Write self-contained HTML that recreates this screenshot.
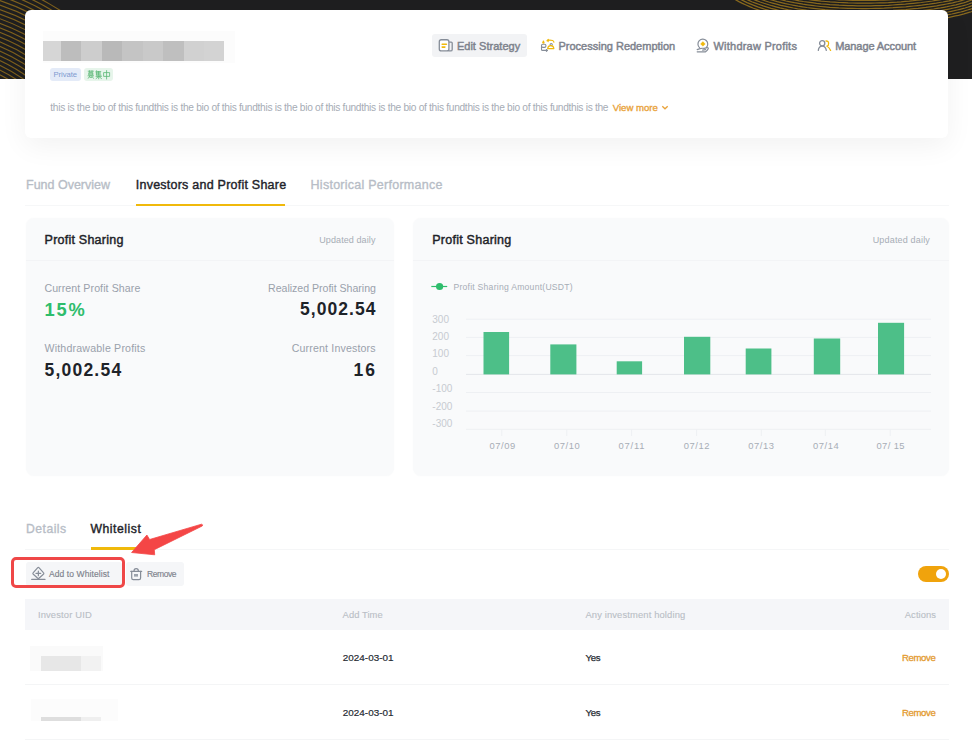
<!DOCTYPE html>
<html><head><meta charset="utf-8">
<style>
html,body{margin:0;padding:0;}
body{width:972px;height:749px;position:relative;overflow:hidden;background:#ffffff;font-family:"Liberation Sans",sans-serif;}
.a{position:absolute;}
.t{position:absolute;white-space:nowrap;}
</style></head><body>
<!-- top dark band -->
<div class="a" style="left:0;top:0;width:972px;height:79px;background:#1f1f20;"></div>
<svg class="a" style="left:0;top:0" width="972" height="79" viewBox="0 0 972 79">
  <g fill="none" stroke="#7f611d" stroke-width="1.15">
    <path d="M-1 -17.8 A235.5 235.5 0 0 1 132.8 85 M-1 -13.3 A231.2 231.2 0 0 1 127.8 85 M-1 -8.8 A226.9 226.9 0 0 1 122.7 85 M-1 -4.3 A222.6 222.6 0 0 1 117.5 85 M-1 0.2 A218.3 218.3 0 0 1 112.3 85 M-1 4.8 A214.0 214.0 0 0 1 107.1 85 M-1 9.3 A209.7 209.7 0 0 1 101.8 85 M-1 13.8 A205.4 205.4 0 0 1 96.5 85 M-1 18.4 A201.1 201.1 0 0 1 91.1 85 M-1 23.0 A196.8 196.8 0 0 1 85.6 85 M-1 27.5 A192.5 192.5 0 0 1 80.1 85 M-1 32.1 A188.2 188.2 0 0 1 74.4 85 M-1 36.7 A183.9 183.9 0 0 1 68.7 85 M-1 41.4 A179.6 179.6 0 0 1 62.9 85 M-1 46.0 A175.3 175.3 0 0 1 56.9 85 M-1 50.7 A171.0 171.0 0 0 1 50.8 85 M-1 55.4 A166.7 166.7 0 0 1 44.5 85 M-1 60.1 A162.4 162.4 0 0 1 38.0 85 M-1 64.8 A158.1 158.1 0 0 1 31.3 85 M-1 69.6 A153.8 153.8 0 0 1 24.3 85 M-1 74.4 A149.5 149.5 0 0 1 17.0 85 M-1 79.2 A145.2 145.2 0 0 1 9.2 85 M-1 84.0 A140.9 140.9 0 0 1 0.7 85"/>
    <path d="M729.1 -4.2 L732.3 -2.2 L735.5 -0.3 L738.9 1.6 L742.4 3.4 L746.0 5.0 L749.7 6.6 L753.5 8.2 L757.4 9.6 L761.4 11.0 L765.5 12.3 L769.6 13.5 L773.8 14.7 L778.1 15.7 L782.5 16.8 L786.9 17.7 L791.3 18.6 L795.9 19.4 L800.4 20.2 L805.0 20.9 L809.6 21.5 L814.3 22.1 L819.0 22.6 L823.7 23.0 L828.4 23.4 L833.2 23.8 L837.9 24.1 L842.7 24.3 L847.4 24.5 L852.2 24.6 L856.9 24.7 L861.7 24.8 L866.4 24.8 L871.0 24.7 L875.7 24.6 L880.3 24.5 L884.9 24.3 L889.4 24.1 L893.9 23.9 L898.4 23.6 L902.7 23.3 L907.1 22.9 L911.3 22.6 L915.5 22.1 L919.6 21.7 L923.6 21.2 L927.6 20.7 L931.4 20.2 L935.2 19.7 L938.8 19.1 L942.4 18.5 L945.8 17.9 L949.2 17.3 L952.4 16.6 L955.5 15.9 L958.5 15.3 L961.3 14.6 L964.0 13.9 L966.6 13.1 L969.0 12.4 L971.3 11.7 L973.4 10.9 L975.3 10.2 L977.1 9.4 L978.7 8.7 L980.2 7.9 L981.5 7.1 L982.6 6.4 L983.5 5.6 M733.7 -4.5 L736.9 -2.6 L740.2 -0.8 L743.6 0.9 L747.1 2.6 L750.8 4.1 L754.5 5.6 L758.4 7.1 L762.3 8.4 L766.3 9.7 L770.4 10.9 L774.5 12.1 L778.8 13.1 L783.1 14.1 L787.4 15.1 L791.8 15.9 L796.3 16.7 L800.8 17.5 L805.4 18.2 L810.0 18.8 L814.6 19.4 L819.3 19.9 L824.0 20.3 L828.7 20.7 L833.4 21.1 L838.1 21.4 L842.8 21.6 L847.5 21.8 L852.3 21.9 L857.0 22.0 L861.7 22.1 L866.4 22.1 L871.0 22.0 L875.6 21.9 L880.2 21.8 L884.8 21.6 L889.3 21.4 L893.8 21.2 L898.2 20.9 L902.5 20.6 L906.8 20.3 L911.1 19.9 L915.2 19.5 L919.3 19.0 L923.3 18.6 L927.2 18.1 L931.0 17.5 L934.8 17.0 L938.4 16.4 L941.9 15.8 L945.3 15.2 L948.7 14.6 L951.8 14.0 L954.9 13.3 L957.8 12.6 L960.6 12.0 L963.3 11.3 L965.8 10.5 L968.2 9.8 L970.4 9.1 L972.4 8.4 L974.3 7.7 L976.0 7.0 L977.5 6.2 L978.9 5.5 L980.0 4.9 L980.9 4.2 L981.7 3.5 M738.2 -5.0 L741.4 -3.2 L744.8 -1.5 L748.3 0.1 L751.8 1.7 L755.5 3.1 L759.3 4.5 L763.1 5.9 L767.1 7.1 L771.1 8.3 L775.2 9.4 L779.4 10.5 L783.7 11.5 L788.0 12.4 L792.3 13.3 L796.8 14.1 L801.3 14.8 L805.8 15.5 L810.3 16.1 L814.9 16.7 L819.5 17.2 L824.2 17.6 L828.9 18.0 L833.5 18.4 L838.2 18.7 L842.9 18.9 L847.6 19.1 L852.3 19.2 L857.0 19.3 L861.7 19.4 L866.3 19.4 L871.0 19.3 L875.6 19.2 L880.1 19.1 L884.7 18.9 L889.2 18.7 L893.6 18.5 L898.0 18.2 L902.3 17.9 L906.6 17.6 L910.8 17.2 L914.9 16.8 L919.0 16.3 L923.0 15.9 L926.9 15.4 L930.7 14.9 L934.4 14.3 L938.0 13.8 L941.5 13.2 L944.9 12.6 L948.1 12.0 L951.3 11.3 L954.3 10.7 L957.2 10.0 L960.0 9.3 L962.6 8.6 L965.1 8.0 L967.4 7.3 L969.5 6.6 L971.5 5.9 L973.3 5.2 L974.9 4.5 L976.3 3.8 L977.5 3.2 L978.5 2.6 L979.3 2.1 L980.0 1.5 M742.7 -5.6 L746.0 -3.9 L749.4 -2.4 L752.9 -0.8 L756.5 0.6 L760.2 2.0 L764.0 3.3 L767.9 4.5 L771.8 5.7 L775.9 6.8 L780.0 7.9 L784.2 8.9 L788.5 9.8 L792.8 10.6 L797.2 11.4 L801.7 12.2 L806.2 12.8 L810.7 13.5 L815.2 14.0 L819.8 14.5 L824.4 15.0 L829.1 15.3 L833.7 15.7 L838.4 16.0 L843.1 16.2 L847.7 16.4 L852.4 16.5 L857.1 16.6 L861.7 16.7 L866.3 16.7 L870.9 16.6 L875.5 16.5 L880.1 16.4 L884.6 16.2 L889.0 16.0 L893.4 15.8 L897.8 15.5 L902.1 15.2 L906.4 14.9 L910.5 14.5 L914.7 14.1 L918.7 13.7 L922.6 13.2 L926.5 12.7 L930.3 12.2 L934.0 11.7 L937.5 11.1 L941.0 10.5 L944.4 9.9 L947.6 9.3 L950.7 8.7 L953.7 8.0 L956.6 7.4 L959.3 6.7 L961.9 6.0 L964.3 5.4 L966.6 4.7 L968.7 4.0 L970.6 3.3 L972.3 2.7 L973.8 2.0 L975.1 1.4 L976.2 0.8 L977.1 0.3 L977.6 -0.1 L978.2 -0.6 M750.5 -4.8 L753.9 -3.3 L757.4 -1.9 L761.1 -0.6 L764.8 0.7 L768.7 2.0 L772.6 3.1 L776.6 4.2 L780.7 5.3 L784.8 6.2 L789.1 7.1 L793.4 8.0 L797.7 8.8 L802.1 9.5 L806.5 10.2 L811.0 10.8 L815.5 11.3 L820.1 11.8 L824.7 12.3 L829.3 12.7 L833.9 13.0 L838.5 13.3 L843.2 13.5 L847.8 13.7 L852.5 13.8 L857.1 13.9 L861.7 14.0 L866.3 14.0 L870.9 13.9 L875.4 13.8 L880.0 13.7 L884.4 13.5 L888.9 13.3 L893.3 13.1 L897.6 12.8 L901.9 12.5 L906.1 12.2 L910.3 11.8 L914.4 11.4 L918.4 11.0 L922.3 10.5 L926.2 10.0 L929.9 9.5 L933.6 9.0 L937.1 8.4 L940.6 7.9 L943.9 7.3 L947.1 6.7 L950.2 6.0 L953.1 5.4 L956.0 4.8 L958.6 4.1 L961.2 3.4 L963.5 2.8 L965.8 2.1 L967.8 1.4 L969.6 0.8 L971.3 0.2 L972.7 -0.5 L973.9 -1.0 L974.9 -1.5 L975.6 -1.9 L976.0 -2.2 L976.5 -2.7 M754.9 -5.8 L758.4 -4.4 L762.0 -3.1 L765.7 -1.8 L769.5 -0.6 L773.3 0.5 L777.3 1.6 L781.3 2.6 L785.4 3.6 L789.6 4.5 L793.9 5.3 L798.2 6.1 L802.5 6.8 L806.9 7.5 L811.4 8.1 L815.9 8.6 L820.4 9.1 L824.9 9.6 L829.5 10.0 L834.1 10.3 L838.7 10.6 L843.3 10.8 L847.9 11.0 L852.5 11.1 L857.1 11.2 L861.7 11.3 L866.3 11.3 L870.9 11.2 L875.4 11.1 L879.9 11.0 L884.3 10.8 L888.8 10.6 L893.1 10.4 L897.4 10.1 L901.7 9.8 L905.9 9.5 L910.0 9.1 L914.1 8.7 L918.1 8.3 L922.0 7.8 L925.8 7.4 L929.5 6.8 L933.2 6.3 L936.7 5.8 L940.1 5.2 L943.4 4.6 L946.6 4.0 L949.6 3.4 L952.6 2.8 L955.3 2.1 L958.0 1.5 L960.5 0.8 L962.8 0.2 L964.9 -0.5 L966.9 -1.1 L968.7 -1.7 L970.3 -2.3 L971.6 -2.9 L972.7 -3.4 L973.6 -3.9 L974.1 -4.2 L974.4 -4.4 L974.8 -4.7 M762.9 -5.6 L766.5 -4.4 L770.3 -3.2 L774.1 -2.1 L778.0 -1.0 L782.0 0.0 L786.0 1.0 L790.2 1.8 L794.4 2.7 L798.6 3.4 L802.9 4.2 L807.3 4.8 L811.7 5.4 L816.2 6.0 L820.7 6.5 L825.2 6.9 L829.7 7.3 L834.3 7.6 L838.8 7.9 L843.4 8.1 L848.0 8.3 L852.6 8.4 L857.2 8.5 L861.7 8.6 L866.3 8.6 L870.8 8.5 L875.3 8.4 L879.8 8.3 L884.2 8.2 L888.6 7.9 L893.0 7.7 L897.3 7.4 L901.5 7.1 L905.7 6.8 L909.8 6.4 L913.8 6.0 L917.8 5.6 L921.7 5.2 L925.5 4.7 L929.2 4.2 L932.8 3.6 L936.3 3.1 L939.6 2.5 L942.9 2.0 L946.1 1.4 L949.1 0.8 L952.0 0.1 L954.7 -0.5 L957.3 -1.1 L959.8 -1.8 L962.0 -2.4 L964.1 -3.0 L966.1 -3.7 L967.8 -4.3 L969.3 -4.9 L970.5 -5.4 L971.5 -5.9 M771.0 -5.8 L774.8 -4.7 L778.7 -3.6 L782.6 -2.6 L786.6 -1.7 L790.7 -0.8 L794.9 0.0 L799.1 0.8 L803.4 1.5 L807.7 2.1 L812.1 2.7 L816.5 3.3 L820.9 3.8 L825.4 4.2 L829.9 4.6 L834.5 4.9 L839.0 5.2 L843.5 5.4 L848.1 5.6 L852.7 5.7 L857.2 5.8 L861.8 5.9 L866.3 5.9 L870.8 5.8 L875.3 5.7 L879.7 5.6 L884.1 5.5 L888.5 5.3 L892.8 5.0 L897.1 4.7 L901.3 4.4 L905.4 4.1 L909.5 3.7 L913.5 3.3 L917.5 2.9 L921.3 2.5 L925.1 2.0 L928.8 1.5 L932.4 1.0 L935.8 0.4 L939.2 -0.1 L942.4 -0.7 L945.5 -1.3 L948.5 -1.9 L951.4 -2.5 L954.1 -3.1 L956.7 -3.8 L959.1 -4.4 L961.3 -5.0 L963.3 -5.6 M783.2 -5.2 L787.2 -4.3 L791.2 -3.4 L795.4 -2.6 L799.5 -1.9 L803.8 -1.2 L808.1 -0.5 L812.4 0.1 L816.8 0.6 L821.2 1.1 L825.7 1.5 L830.1 1.9 L834.6 2.2 L839.1 2.5 L843.7 2.7 L848.2 2.9 L852.7 3.0 L857.3 3.1 L861.8 3.2 L866.3 3.2 L870.7 3.1 L875.2 3.0 L879.6 2.9 L884.0 2.8 L888.4 2.6 L892.6 2.3 L896.9 2.1 L901.1 1.8 L905.2 1.4 L909.3 1.1 L913.3 0.7 L917.2 0.2 L921.0 -0.2 L924.8 -0.7 L928.4 -1.2 L932.0 -1.7 L935.4 -2.2 L938.7 -2.8 L941.9 -3.4 L945.0 -3.9 L948.0 -4.5 L950.8 -5.1 L953.5 -5.8 M795.9 -5.3 L800.0 -4.5 L804.2 -3.8 L808.5 -3.2 L812.8 -2.6 L817.1 -2.1 L821.5 -1.6 L825.9 -1.2 L830.3 -0.8 L834.8 -0.5 L839.3 -0.2 L843.8 0.0 L848.3 0.2 L852.8 0.3 L857.3 0.4 L861.8 0.5 L866.3 0.5 L870.7 0.4 L875.1 0.3 L879.5 0.2 L883.9 0.1 L888.2 -0.1 L892.5 -0.4 L896.7 -0.6 L900.9 -0.9 L905.0 -1.3 L909.0 -1.6 L913.0 -2.0 L916.9 -2.4 L920.7 -2.9 L924.4 -3.4 L928.0 -3.8 L931.5 -4.4 L935.0 -4.9 L938.3 -5.4 M808.8 -5.9 L813.1 -5.3 L817.4 -4.8 L821.8 -4.3 L826.1 -3.9 L830.6 -3.5 L835.0 -3.2 L839.4 -2.9 L843.9 -2.7 L848.4 -2.5 L852.9 -2.4 L857.3 -2.3 L861.8 -2.2 L866.2 -2.2 L870.7 -2.3 L875.1 -2.4 L879.4 -2.5 L883.8 -2.6 L888.1 -2.8 L892.3 -3.1 L896.5 -3.3 L900.7 -3.6 L904.8 -4.0 L908.8 -4.3 L912.7 -4.7 L916.6 -5.1 L920.4 -5.6 M835.2 -5.9 L839.6 -5.6 L844.0 -5.4 L848.5 -5.2 L852.9 -5.1 L857.4 -5.0 L861.8 -4.9 L866.2 -4.9 L870.6 -5.0 L875.0 -5.1 L879.4 -5.2 L883.7 -5.3 L887.9 -5.5 L892.2 -5.8" stroke-width="1.2" stroke="#8a6a1e"/>
  </g>
</svg>
<!-- header card -->
<div class="a" style="left:25.2px;top:9.5px;width:923.3px;height:128.5px;background:#fff;border-radius:6px;box-shadow:0 8px 28px rgba(0,0,0,0.055);"></div>
<!-- blurred name -->
<div class="a" style="left:43px;top:31px;width:192px;height:31.5px;background:#fcfcfc;"></div>
<div class="a" style="left:43px;top:40.8px;height:20.2px;display:flex;filter:blur(0.4px);">
  <div style="width:18px;background:#d6d6d6"></div><div style="width:20px;background:#bdbdbd"></div><div style="width:21px;background:#cdcdcd"></div><div style="width:20px;background:#b9b9b9"></div><div style="width:21px;background:#c4c4c4"></div><div style="width:20px;background:#c9c9c9"></div><div style="width:21px;background:#bfbfbf"></div><div style="width:20px;background:#d1d1d1"></div><div style="width:20px;background:#d3d3d3"></div>
</div>
<!-- tags -->
<div class="a" style="left:50px;top:67.8px;width:30.5px;height:13.7px;background:#e4ebf8;border-radius:3px;"></div>
<div class="a" style="left:84px;top:67.8px;width:29px;height:13.7px;background:#e7f5eb;border-radius:3px;"></div>
<svg class="a" style="left:87px;top:70px" width="24" height="10" viewBox="0 0 24 10">
  <g fill="none" stroke="#5ab775" stroke-width="0.8">
    <!-- 募 -->
    <path d="M0.8 1.2H6.8M2.6 0.3V2.2M5 0.3V2.2M1.8 2.6H5.8V5H1.8ZM1.8 3.8H5.8M0.6 5.8H7M3 5.8L1 8.6M4.6 5.8L6.6 8.6M2.6 7.4H5"/>
    <!-- 集 -->
    <path d="M9.6 0.4L8.8 2.2M9.4 1.6V5.4M9.4 1.6H14.2M9.4 2.8H13.8M9.4 4H13.8M9.4 5.2H14.4M11.6 1V5.2M8.6 6.4H14.8M11.7 5.6V9.2M11.4 6.6L8.8 8.8M12 6.6L14.8 8.8"/>
    <!-- 中 -->
    <path d="M16.6 2.6H22.6V6.4H16.6ZM19.6 0.2V9.4"/>
  </g>
</svg>
<!-- edit strategy bg -->
<div class="a" style="left:431.8px;top:33.9px;width:95px;height:23.1px;background:#f2f3f5;border-radius:3px;"></div>
<!-- icons header -->
<svg class="a" style="left:436px;top:37px" width="18" height="16" viewBox="0 0 18 16">
  <g fill="none" stroke="#868d98" stroke-width="1.3">
    <rect x="3.3" y="2.75" width="9.6" height="11.2" rx="2" fill="#fff"/>
    <path d="M12.9 5.1H15.2Q16.2 5.1 16.2 6.1V12.4Q16.2 13.95 14.6 13.95H12.4"/>
  </g>
  <g stroke="#f0b90b" stroke-width="1.6" stroke-linecap="round">
    <path d="M6.2 7.3H10.4M6.2 10.1H8.9"/>
  </g>
</svg>
<svg class="a" style="left:539px;top:37px" width="18" height="16" viewBox="0 0 18 16">
  <g fill="none" stroke="#868d98" stroke-width="1.1" stroke-linecap="round" stroke-linejoin="round">
    <rect x="2.5" y="7.2" width="4.4" height="3.2" rx="1.3"/>
    <path d="M2.5 9.6V12.4Q2.5 13.4 3.6 13.4H8.4M7.4 12.5L8.5 13.4L7.4 14.3"/>
    <circle cx="12.2" cy="7.6" r="1.1"/>
  </g>
  <g fill="none" stroke="#f0b90b" stroke-width="1.1" stroke-linecap="round" stroke-linejoin="round">
    <path d="M8 3.7Q10.6 2.6 13.6 3.6Q14.9 4.2 14.9 5.2M9.3 2.4L8 3.7L9.4 4.6"/>
    <path d="M8.6 11.6Q9 8.6 11.8 8.6Q14.6 8.6 14.9 11.6Z"/>
    <path d="M4.4 4L3.7 5.7Q4.4 6.5 5.1 5.7Z" fill="#f0b90b"/>
  </g>
</svg>
<svg class="a" style="left:695px;top:37px" width="16" height="16" viewBox="0 0 16 16">
  <g fill="none" stroke="#868d98" stroke-width="1.2" stroke-linecap="round" stroke-linejoin="round">
    <path d="M4.5 10.6A4.9 4.9 0 1 1 11.4 10.4"/>
    <path d="M2.2 12.6L5 11.6Q7 11 9.2 11.4L12.2 10.6Q13.6 10.6 13.2 11.8Q12.4 13.6 10.6 14.8H2.2"/>
    <path d="M7.6 13.2L10.6 12.6"/>
  </g>
  <path d="M7.9 4.6L10.3 6.9L7.9 9.2L5.5 6.9Z" fill="#f0b90b" stroke="#f0b90b" stroke-width="0.3" stroke-linejoin="round"/>
</svg>
<svg class="a" style="left:816px;top:37px" width="17" height="16" viewBox="0 0 17 16">
  <g fill="none" stroke-width="1.3" stroke-linecap="round">
    <circle cx="6.2" cy="6.2" r="2.6" stroke="#868d98"/>
    <path d="M2.3 13.4Q2.8 9.2 6.2 9.2Q9.6 9.2 10.3 13.4" stroke="#868d98"/>
    <path d="M10 4Q12.6 3.8 12.6 6.4Q12.6 8.6 11.2 9.2Q13.4 10.6 14.6 13.4" stroke="#f0b90b"/>
  </g>
</svg>
<!-- view more chevron -->
<svg class="a" style="left:661px;top:104px" width="8" height="7" viewBox="0 0 8 7">
  <path d="M1.3 2.2L4 4.8L6.7 2.2" fill="none" stroke="#e9a33b" stroke-width="1.3"/>
</svg>
<!-- tabs divider -->
<div class="a" style="left:25px;top:205px;width:924px;height:1px;background:#f6f7f8;"></div>
<div class="a" style="left:135.8px;top:204px;width:149.7px;height:2px;background:#f0b90b;"></div>
<!-- left card -->
<div class="a" style="left:25.5px;top:218px;width:368.5px;height:258.2px;background:#f9fafb;border-radius:8px;box-shadow:0 0 2px rgba(0,0,0,0.025);"></div>
<div class="a" style="left:25.5px;top:260px;width:368.5px;height:1px;background:#f3f4f6;"></div>
<!-- right card -->
<div class="a" style="left:413.3px;top:218px;width:535.7px;height:258.2px;background:#f9fafb;border-radius:8px;box-shadow:0 0 2px rgba(0,0,0,0.025);"></div>
<div class="a" style="left:413.3px;top:260px;width:535.7px;height:1px;background:#f3f4f6;"></div>
<!-- chart -->
<svg class="a" style="left:413px;top:270px" width="536" height="190" viewBox="413 270 536 190">
  <g stroke="#eef0f3" stroke-width="1">
    <path d="M466 319.2H931M466 337.4H931M466 355.6H931M466 392.5H931M466 411.1H931M466 429.3H931"/>
    <path d="M501.8 429.3V436M566.8 429.3V436M631.6 429.3V436M696.6 429.3V436M761.3 429.3V436M825.3 429.3V436M890.2 429.3V436"/>
  </g>
  <path d="M466 374.4H931" stroke="#e4e6ea" stroke-width="1"/>
  <g fill="#4dbf88">
    <rect x="483.5" y="332" width="25.6" height="42.4"/>
    <rect x="550.3" y="344.4" width="26.1" height="30"/>
    <rect x="616.7" y="361.3" width="25.4" height="13.1"/>
    <rect x="684" y="336.8" width="26.3" height="37.6"/>
    <rect x="745.7" y="348.5" width="25.7" height="25.9"/>
    <rect x="813.8" y="338.5" width="26.4" height="35.9"/>
    <rect x="878" y="322.8" width="26.1" height="51.6"/>
  </g>
  <path d="M431.3 286.5H447.2" stroke="#2ebd6c" stroke-width="1.2"/>
  <circle cx="439.6" cy="286.5" r="3.6" fill="#2ebd6c"/>
</svg>
<!-- sub tabs divider -->
<div class="a" style="left:25px;top:548.5px;width:924px;height:1px;background:#f5f6f7;"></div>
<div class="a" style="left:90.5px;top:547px;width:51px;height:2.5px;background:#f0b90b;"></div>
<!-- buttons -->
<div class="a" style="left:25.5px;top:561.5px;width:96px;height:24px;background:#f5f6f8;border-radius:3px;"></div>
<div class="a" style="left:125.5px;top:561.5px;width:58px;height:24px;background:#f5f6f8;border-radius:3px;"></div>
<svg class="a" style="left:29px;top:563px" width="20" height="20" viewBox="0 0 20 20">
  <g fill="none" stroke="#868d98" stroke-width="1.2" stroke-linecap="round" stroke-linejoin="round">
    <path d="M8.55 4.8Q9.35 4 10.15 4.8L14.4 9.6Q15.2 10.4 14.4 11.2L10.2 15Q9.35 15.7 8.5 15L4.3 11.2Q3.5 10.4 4.3 9.6Z"/>
    <path d="M7 10.4H11.7M9.35 8.1V12.7"/>
    <path d="M2.7 16.4H16"/>
  </g>
</svg>
<svg class="a" style="left:127px;top:563px" width="20" height="20" viewBox="0 0 20 20">
  <g fill="none" stroke="#868d98" stroke-width="1.2" stroke-linecap="round" stroke-linejoin="round">
    <path d="M3.7 8.3H14.7"/>
    <path d="M7 8.2Q7 5.6 9.2 5.6Q11.4 5.6 11.4 8.2"/>
    <path d="M4.7 8.3V15Q4.7 16.6 6.3 16.6H12Q13.6 16.6 13.6 15V8.3"/>
  </g>
  <rect x="7" y="11" width="4" height="2.6" fill="#9ca3ad"/>
</svg>
<!-- red highlight box -->
<div class="a" style="left:11.3px;top:557px;width:107.7px;height:25.3px;border:3px solid #ef4747;border-radius:5px;"></div>
<!-- arrow -->
<svg class="a" style="left:120px;top:515px" width="90" height="45" viewBox="120 515 90 45">
  <path d="M131.6 552.5L146.9 535L149.6 539.5L201.5 524.2Q203.4 524.6 202.2 526L154.3 549.7L154.7 554.8Z" fill="#f44646" stroke="#f44646" stroke-width="0.8" stroke-linejoin="round"/>
</svg>
<!-- toggle -->
<div class="a" style="left:917.7px;top:566.3px;width:31.2px;height:15.4px;background:#f0a30c;border-radius:8px;"></div>
<div class="a" style="left:935.8px;top:568.8px;width:10.5px;height:10.5px;background:#fff;border-radius:50%;"></div>
<!-- table header -->
<div class="a" style="left:25px;top:598.5px;width:924px;height:31px;background:#f5f6f9;"></div>
<div class="a" style="left:25px;top:683.5px;width:924px;height:1px;background:#f4f5f6;"></div>
<div class="a" style="left:25px;top:739px;width:924px;height:1px;background:#f4f5f6;"></div>
<!-- blurred uid rows -->
<div class="a" style="left:30px;top:646.3px;width:73px;height:24.4px;background:#fafafa;"></div>
<div class="a" style="left:41px;top:655.8px;width:40px;height:14.9px;background:#e7e7e7;"></div>
<div class="a" style="left:81px;top:655.8px;width:20px;height:14.9px;background:#f2f2f2;"></div>
<div class="a" style="left:31px;top:699.3px;width:87px;height:21.3px;background:#fcfcfc;"></div>
<div class="a" style="left:41px;top:717.4px;width:40px;height:3.2px;background:#dedede;"></div>
<div class="a" style="left:81px;top:717.4px;width:20px;height:3.2px;background:#efefef;"></div>

<div class="t" id="t0" style="top:39.89px;font-size:11.0px;line-height:13.20px;font-weight:400;color:#7d828c;letter-spacing:0.027px;-webkit-text-stroke:0.45px #7d828c;left:456.90px;"><span>Edit Strategy</span></div>
<div class="t" id="t1" style="top:39.89px;font-size:11.0px;line-height:13.20px;font-weight:400;color:#7d828c;letter-spacing:-0.003px;-webkit-text-stroke:0.45px #7d828c;left:558.50px;"><span>Processing Redemption</span></div>
<div class="t" id="t2" style="top:39.89px;font-size:11.0px;line-height:13.20px;font-weight:400;color:#7d828c;letter-spacing:0.222px;-webkit-text-stroke:0.45px #7d828c;left:713.50px;"><span>Withdraw Profits</span></div>
<div class="t" id="t3" style="top:39.89px;font-size:11.0px;line-height:13.20px;font-weight:400;color:#7d828c;letter-spacing:-0.077px;-webkit-text-stroke:0.45px #7d828c;left:835.20px;"><span>Manage Account</span></div>
<div class="t" id="t4" style="top:70.31px;font-size:7.7px;line-height:9.24px;font-weight:400;color:#7f9bd0;letter-spacing:-0.058px;left:53.50px;"><span>Private</span></div>
<div class="t" id="t5" style="top:101.84px;font-size:10.2px;line-height:12.24px;font-weight:400;color:#a6acb5;letter-spacing:-0.303px;left:50.30px;"><span>this is the bio of this fundthis is the bio of this fundthis is the bio of this fundthis is the bio of this fundthis is the bio of this fundthis is the</span></div>
<div class="t" id="t6" style="top:102.31px;font-size:9.6px;line-height:11.52px;font-weight:400;color:#e9a33b;letter-spacing:-0.026px;-webkit-text-stroke:0.35px #e9a33b;left:612.80px;"><span>View more</span></div>
<div class="t" id="t7" style="top:177.77px;font-size:12.5px;line-height:15.00px;font-weight:400;color:#b7bdc6;letter-spacing:-0.003px;-webkit-text-stroke:0.35px #b7bdc6;left:26.00px;"><span>Fund Overview</span></div>
<div class="t" id="t8" style="top:177.77px;font-size:12.5px;line-height:15.00px;font-weight:400;color:#1e2329;letter-spacing:0.233px;-webkit-text-stroke:0.4px #1e2329;left:135.80px;"><span>Investors and Profit Share</span></div>
<div class="t" id="t9" style="top:177.77px;font-size:12.5px;line-height:15.00px;font-weight:400;color:#b7bdc6;letter-spacing:0.254px;-webkit-text-stroke:0.35px #b7bdc6;left:310.60px;"><span>Historical Performance</span></div>
<div class="t" id="t10" style="top:233.47px;font-size:12.5px;line-height:15.00px;font-weight:400;color:#1e2329;letter-spacing:0.232px;-webkit-text-stroke:0.45px #1e2329;left:44.60px;"><span>Profit Sharing</span></div>
<div class="t" id="t11" style="top:235.38px;font-size:9.0px;line-height:10.80px;font-weight:400;color:#a7adb6;letter-spacing:0.089px;left:-624.60px;width:1000px;text-align:right;margin-left:0.089px;"><span>Updated daily</span></div>
<div class="t" id="t12" style="top:282.17px;font-size:10.6px;line-height:12.72px;font-weight:400;color:#9aa1ab;letter-spacing:0.089px;left:44.40px;"><span>Current Profit Share</span></div>
<div class="t" id="t13" style="top:298.58px;font-size:18.3px;line-height:21.96px;font-weight:700;color:#2ebd6c;letter-spacing:1.833px;left:44.40px;"><span>15%</span></div>
<div class="t" id="t14" style="top:282.17px;font-size:10.6px;line-height:12.72px;font-weight:400;color:#9aa1ab;letter-spacing:-0.021px;left:-624.10px;width:1000px;text-align:right;margin-left:-0.021px;"><span>Realized Profit Sharing</span></div>
<div class="t" id="t15" style="top:299.13px;font-size:17.5px;line-height:21.00px;font-weight:700;color:#1e2329;letter-spacing:1.045px;left:-624.60px;width:1000px;text-align:right;margin-left:1.045px;"><span>5,002.54</span></div>
<div class="t" id="t16" style="top:342.17px;font-size:10.6px;line-height:12.72px;font-weight:400;color:#9aa1ab;letter-spacing:0.192px;left:44.50px;"><span>Withdrawable Profits</span></div>
<div class="t" id="t17" style="top:359.63px;font-size:17.5px;line-height:21.00px;font-weight:700;color:#1e2329;letter-spacing:1.216px;left:44.50px;"><span>5,002.54</span></div>
<div class="t" id="t18" style="top:342.17px;font-size:10.6px;line-height:12.72px;font-weight:400;color:#9aa1ab;letter-spacing:0.166px;left:-624.40px;width:1000px;text-align:right;margin-left:0.166px;"><span>Current Investors</span></div>
<div class="t" id="t19" style="top:359.63px;font-size:17.5px;line-height:21.00px;font-weight:700;color:#1e2329;letter-spacing:1.967px;left:-625.00px;width:1000px;text-align:right;margin-left:1.967px;"><span>16</span></div>
<div class="t" id="t20" style="top:233.47px;font-size:12.5px;line-height:15.00px;font-weight:400;color:#1e2329;letter-spacing:0.255px;-webkit-text-stroke:0.45px #1e2329;left:432.20px;"><span>Profit Sharing</span></div>
<div class="t" id="t21" style="top:235.38px;font-size:9.0px;line-height:10.80px;font-weight:400;color:#a7adb6;letter-spacing:0.172px;left:-70.20px;width:1000px;text-align:right;margin-left:0.172px;"><span>Updated daily</span></div>
<div class="t" id="t22" style="top:281.76px;font-size:8.6px;line-height:10.32px;font-weight:400;color:#a7adb6;letter-spacing:0.253px;left:453.40px;"><span>Profit Sharing Amount(USDT)</span></div>
<div class="t" id="t23" style="top:313.53px;font-size:10.0px;line-height:12.00px;font-weight:400;color:#c7cbd1;letter-spacing:0.000px;left:432.30px;"><span>300</span></div>
<div class="t" id="t24" style="top:331.03px;font-size:10.0px;line-height:12.00px;font-weight:400;color:#c7cbd1;letter-spacing:0.000px;left:432.30px;"><span>200</span></div>
<div class="t" id="t25" style="top:348.43px;font-size:10.0px;line-height:12.00px;font-weight:400;color:#c7cbd1;letter-spacing:0.000px;left:432.30px;"><span>100</span></div>
<div class="t" id="t26" style="top:365.73px;font-size:10.0px;line-height:12.00px;font-weight:400;color:#c7cbd1;letter-spacing:0.000px;left:432.30px;"><span>0</span></div>
<div class="t" id="t27" style="top:383.23px;font-size:10.0px;line-height:12.00px;font-weight:400;color:#c7cbd1;letter-spacing:0.000px;left:432.30px;"><span>-100</span></div>
<div class="t" id="t28" style="top:400.83px;font-size:10.0px;line-height:12.00px;font-weight:400;color:#c7cbd1;letter-spacing:0.000px;left:432.30px;"><span>-200</span></div>
<div class="t" id="t29" style="top:418.03px;font-size:10.0px;line-height:12.00px;font-weight:400;color:#c7cbd1;letter-spacing:0.000px;left:432.30px;"><span>-300</span></div>
<div class="t" id="t30" style="top:439.60px;font-size:9.4px;line-height:11.28px;font-weight:400;color:#a7adb6;letter-spacing:0.588px;left:2.30px;width:1000px;text-align:center;margin-left:0.294px;"><span>07/09</span></div>
<div class="t" id="t31" style="top:439.60px;font-size:9.4px;line-height:11.28px;font-weight:400;color:#a7adb6;letter-spacing:0.588px;left:66.90px;width:1000px;text-align:center;margin-left:0.294px;"><span>07/10</span></div>
<div class="t" id="t32" style="top:439.60px;font-size:9.4px;line-height:11.28px;font-weight:400;color:#a7adb6;letter-spacing:0.763px;left:131.50px;width:1000px;text-align:center;margin-left:0.382px;"><span>07/11</span></div>
<div class="t" id="t33" style="top:439.60px;font-size:9.4px;line-height:11.28px;font-weight:400;color:#a7adb6;letter-spacing:0.588px;left:196.60px;width:1000px;text-align:center;margin-left:0.294px;"><span>07/12</span></div>
<div class="t" id="t34" style="top:439.60px;font-size:9.4px;line-height:11.28px;font-weight:400;color:#a7adb6;letter-spacing:0.588px;left:261.10px;width:1000px;text-align:center;margin-left:0.294px;"><span>07/13</span></div>
<div class="t" id="t35" style="top:439.60px;font-size:9.4px;line-height:11.28px;font-weight:400;color:#a7adb6;letter-spacing:0.588px;left:325.90px;width:1000px;text-align:center;margin-left:0.294px;"><span>07/14</span></div>
<div class="t" id="t36" style="top:439.60px;font-size:9.4px;line-height:11.28px;font-weight:400;color:#a7adb6;letter-spacing:0.370px;left:390.50px;width:1000px;text-align:center;margin-left:0.185px;"><span>07/ 15</span></div>
<div class="t" id="t37" style="top:521.55px;font-size:12.2px;line-height:14.64px;font-weight:400;color:#b7bdc6;letter-spacing:0.473px;-webkit-text-stroke:0.35px #b7bdc6;left:26.00px;"><span>Details</span></div>
<div class="t" id="t38" style="top:521.55px;font-size:12.2px;line-height:14.64px;font-weight:400;color:#1e2329;letter-spacing:0.542px;-webkit-text-stroke:0.4px #1e2329;left:90.50px;"><span>Whitelist</span></div>
<div class="t" id="t39" style="top:568.85px;font-size:8.5px;line-height:10.20px;font-weight:400;color:#7d828c;letter-spacing:0.094px;-webkit-text-stroke:0.15px #7d828c;left:49.00px;"><span>Add to Whitelist</span></div>
<div class="t" id="t40" style="top:568.85px;font-size:8.5px;line-height:10.20px;font-weight:400;color:#7d828c;letter-spacing:-0.425px;-webkit-text-stroke:0.15px #7d828c;left:147.00px;"><span>Remove</span></div>
<div class="t" id="t41" style="top:609.00px;font-size:9.4px;line-height:11.28px;font-weight:400;color:#b9bec6;letter-spacing:0.152px;-webkit-text-stroke:0.12px #b9bec6;left:37.90px;"><span>Investor UID</span></div>
<div class="t" id="t42" style="top:609.00px;font-size:9.4px;line-height:11.28px;font-weight:400;color:#b9bec6;letter-spacing:0.063px;-webkit-text-stroke:0.12px #b9bec6;left:342.60px;"><span>Add Time</span></div>
<div class="t" id="t43" style="top:609.00px;font-size:9.4px;line-height:11.28px;font-weight:400;color:#b9bec6;letter-spacing:0.137px;-webkit-text-stroke:0.12px #b9bec6;left:585.40px;"><span>Any investment holding</span></div>
<div class="t" id="t44" style="top:609.00px;font-size:9.4px;line-height:11.28px;font-weight:400;color:#b9bec6;letter-spacing:0.074px;-webkit-text-stroke:0.12px #b9bec6;left:-64.00px;width:1000px;text-align:right;margin-left:0.074px;"><span>Actions</span></div>
<div class="t" id="t45" style="top:651.63px;font-size:9.9px;line-height:11.88px;font-weight:400;color:#262b33;letter-spacing:0.042px;-webkit-text-stroke:0.2px #262b33;left:342.70px;"><span>2024-03-01</span></div>
<div class="t" id="t46" style="top:651.91px;font-size:9.6px;line-height:11.52px;font-weight:400;color:#262b33;letter-spacing:-0.277px;-webkit-text-stroke:0.25px #262b33;left:585.50px;"><span>Yes</span></div>
<div class="t" id="t47" style="top:651.91px;font-size:9.6px;line-height:11.52px;font-weight:400;color:#e39a2e;letter-spacing:-0.338px;-webkit-text-stroke:0.3px #e39a2e;left:-64.10px;width:1000px;text-align:right;margin-left:-0.338px;"><span>Remove</span></div>
<div class="t" id="t48" style="top:706.83px;font-size:9.9px;line-height:11.88px;font-weight:400;color:#262b33;letter-spacing:0.042px;-webkit-text-stroke:0.2px #262b33;left:342.70px;"><span>2024-03-01</span></div>
<div class="t" id="t49" style="top:707.11px;font-size:9.6px;line-height:11.52px;font-weight:400;color:#262b33;letter-spacing:-0.277px;-webkit-text-stroke:0.25px #262b33;left:585.50px;"><span>Yes</span></div>
<div class="t" id="t50" style="top:707.11px;font-size:9.6px;line-height:11.52px;font-weight:400;color:#e39a2e;letter-spacing:-0.338px;-webkit-text-stroke:0.3px #e39a2e;left:-64.10px;width:1000px;text-align:right;margin-left:-0.338px;"><span>Remove</span></div>
</body></html>
